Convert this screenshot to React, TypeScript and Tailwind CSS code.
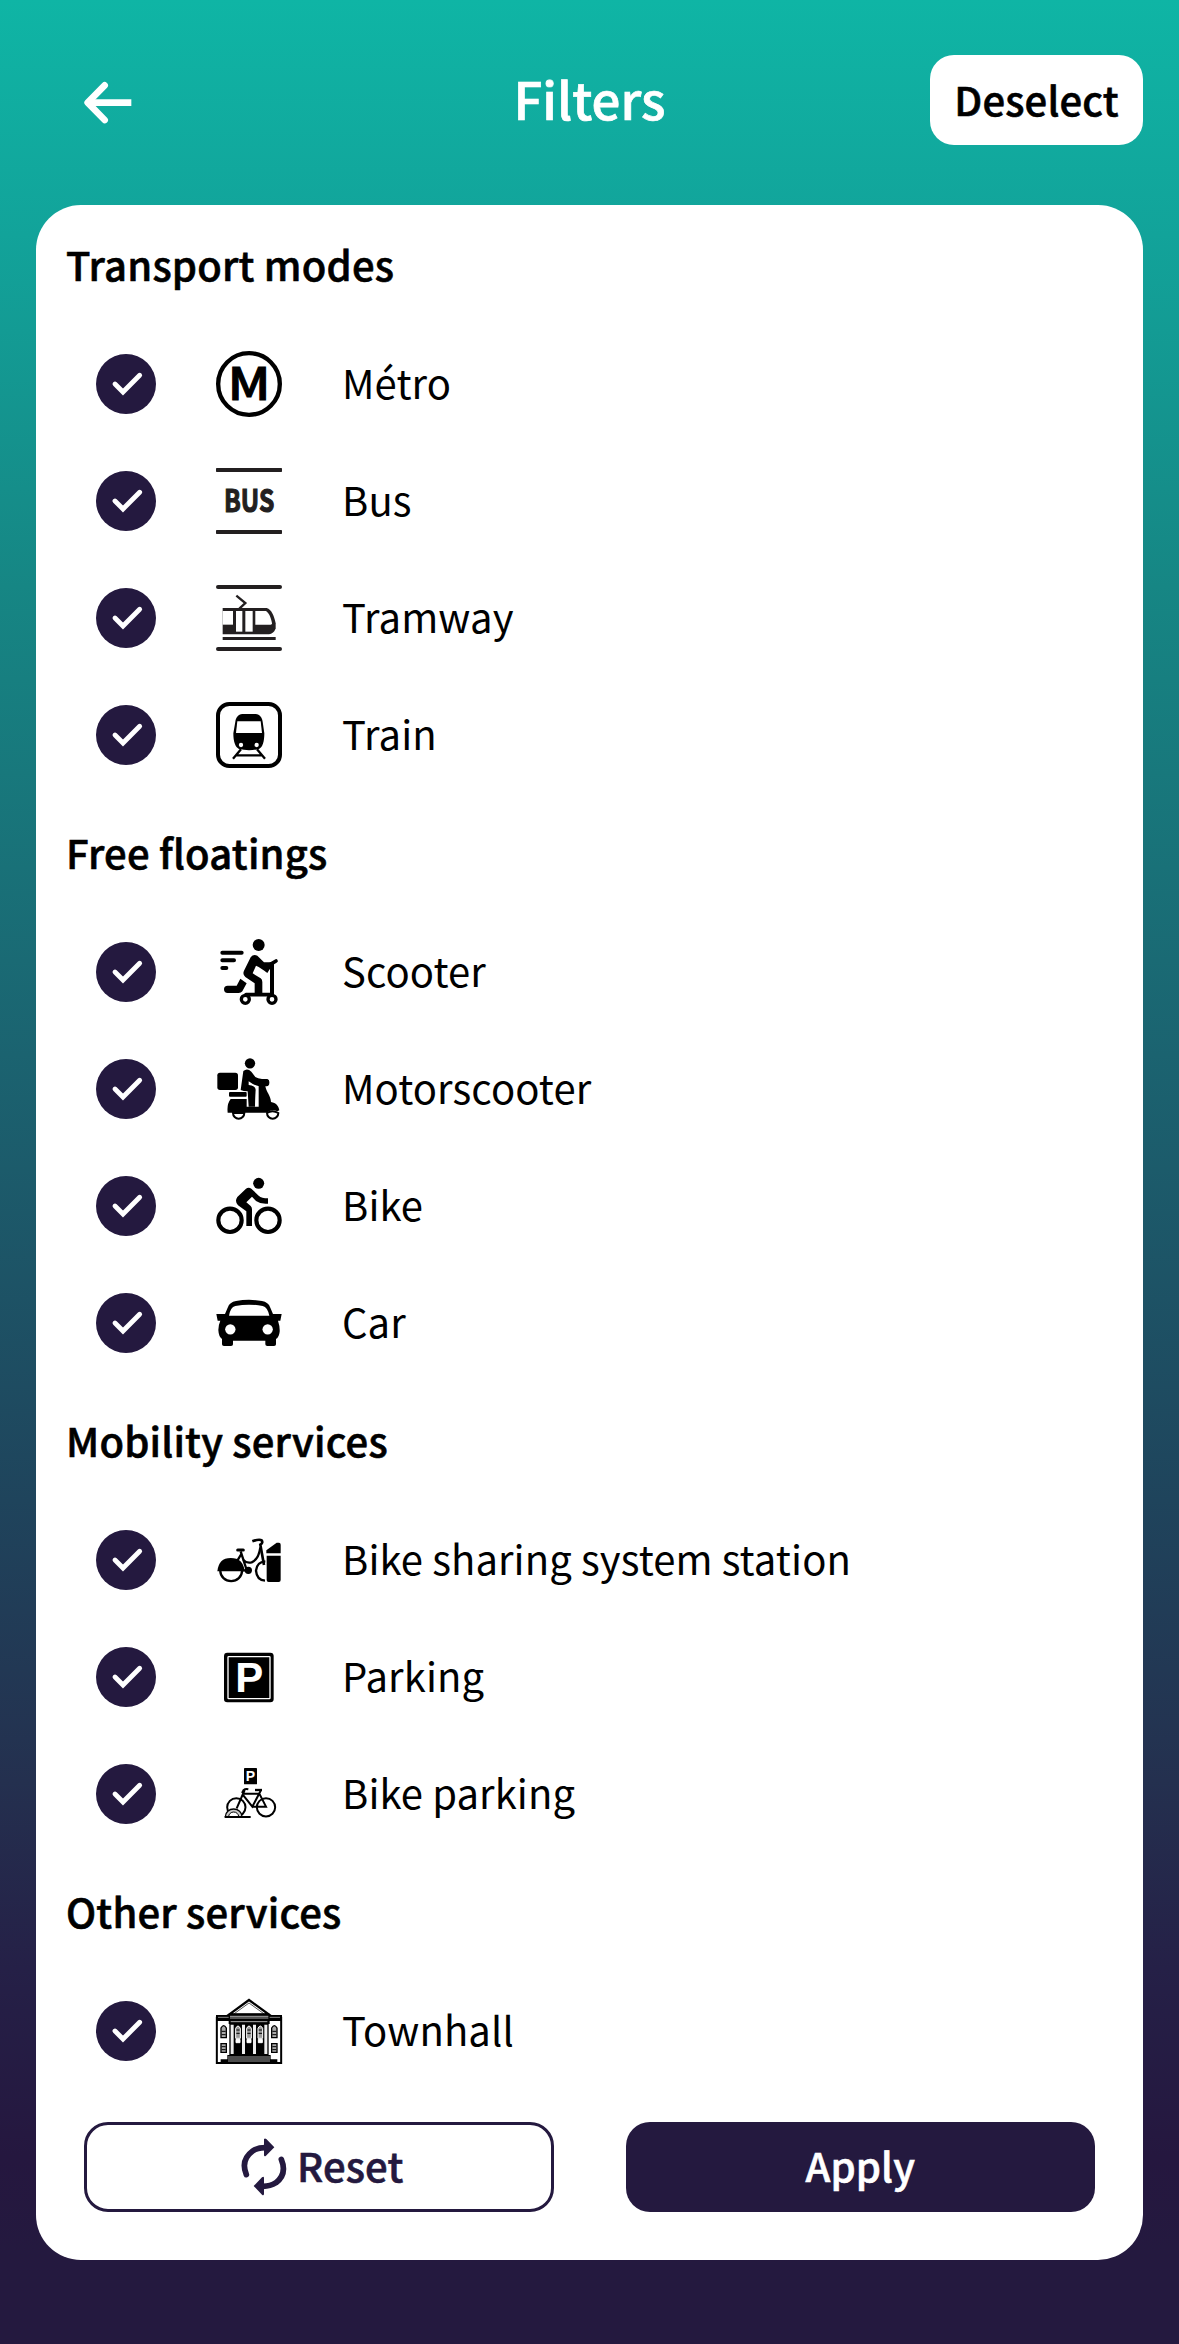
import type { ReactNode } from 'react';

function Icon({ viewBox, children }: { viewBox: string; children: ReactNode }) {
  return (
    <svg viewBox={viewBox} className="size-[66px] shrink-0 overflow-visible text-black" fill="currentColor" aria-hidden="true">
      {children}
    </svg>
  );
}

const MetroIcon = () => (
  <Icon viewBox="408 63 198 198">
    <circle cx="507" cy="162" r="92.5" fill="none" stroke="currentColor" strokeWidth="13" />
    <text x="443" y="211" textLength="128" lengthAdjust="spacingAndGlyphs" stroke="currentColor" strokeWidth="3" className="font-['Noto_Sans_CJK_JP',sans-serif] text-[134px] font-medium">M</text>
  </Icon>
);

const BusIcon = () => (
  <Icon viewBox="408 414 198 198">
    <g fill="#231f20">
      <rect x="408" y="414" width="198" height="12" rx="2" />
      <rect x="408" y="600" width="198" height="12" rx="2" />
      <text x="432" y="546" textLength="151" lengthAdjust="spacingAndGlyphs" stroke="#231f20" strokeWidth="3.500" className="font-['Noto_Sans_CJK_JP',sans-serif] text-[92px] font-bold">BUS</text>
    </g>
  </Icon>
);

const TramIcon = () => (
  <Icon viewBox="408 75 198 198">
    <g fill="#231f20">
      <rect x="408" y="75" width="198" height="12" rx="6" />
      <rect x="408" y="261" width="198" height="12" rx="6" />
      <path d="M428 144H560C575 148 582 168 587 190V205C583 217 575 223 562 223H428Z" />
      <rect x="428" y="231" width="159" height="9" />
      <path d="M469 107L496 129L478 146" fill="none" stroke="#231f20" strokeWidth="7" />
    </g>
    <g fill="white">
      <path d="M428 153H459V194H428Z" />
      <path d="M468 153H487V215H468Z" />
      <path d="M496 153H518V215H496Z" />
      <path d="M526 153H558C568 160 573 174 576 190Q576 194 572 194H526Z" />
    </g>
  </Icon>
);

const TrainIcon = () => (
  <Icon viewBox="408 426 198 198">
    <rect x="414" y="432" width="186" height="186" rx="34" fill="none" stroke="currentColor" strokeWidth="12" />
    <path d="M487 462H527C540 464 546 472 548 485L553 520C553 545 548 562 537 567Q507 574 477 567C466 562 460 545 460 520L466 485C468 472 474 464 487 462Z" />
    <path d="M472 484H542L546 519H468Z" fill="white" />
    <circle cx="483" cy="555" r="6.5" fill="white" />
    <circle cx="530" cy="555" r="6.5" fill="white" />
    <path d="M483 568L459 596M531 568L555 596M468 586H546" fill="none" stroke="currentColor" strokeWidth="7" />
  </Icon>
);

const ScooterIcon = () => (
  <Icon viewBox="78 57 198 198">
    <circle cx="206" cy="75" r="18" />
    <g fill="none" stroke="currentColor" strokeLinecap="round">
      <path d="M97 98H155M97 121H132M97 144H109" strokeWidth="12" />
      <path d="M240 134L258 123" strokeWidth="11" />
      <path d="M246 132V222" strokeWidth="12" />
      <path d="M168 224H246" strokeWidth="11" />
      <circle cx="166" cy="238" r="12" strokeWidth="10" />
      <circle cx="246" cy="238" r="12" strokeWidth="10" />
    </g>
    <path d="M182 112Q190 101 202 107L222 127H248V138L238 149L232 159L223 152L206 141L198 137L188 160L212 175Q217 179 217 186V222H194V190L166 171Q157 163 162 152Z" />
    <path d="M113 197H140L151 176L170 190L157 214Q153 219 146 219H113A11 11 0 0 1 113 197Z" />
  </Icon>
);

const MotorscooterIcon = () => (
  <Icon viewBox="78 408 198 198">
    <circle cx="180" cy="430" r="15.5" />
    <rect x="82" y="458" width="62" height="52" rx="8" />
    <rect x="117" y="516" width="53" height="14" rx="3" />
    <path d="M122 537H170V560H206V498H226C228 515 243 528 243 546C258 549 266 557 268 571L262 574Q247 566 230 578H113Q110 552 122 537Z" />
    <path d="M160 453Q172 443 184 455L196 471Q203 476 216 477H232Q239 479 238 488Q238 498 230 499H208Q190 495 176 484V495Q196 497 197 509L195 560H176L173 514Q160 514 152 510Z" />
    <path d="M198 508H203V557H196Z" fill="white" />
    <path d="M129 579A17 17 0 0 0 163 579ZM231 579A17 17 0 0 0 265 579Q247 569 231 579Z" fill="white" stroke="currentColor" strokeWidth="6" />
  </Icon>
);

const BikeIcon = () => (
  <Icon viewBox="78 69 198 198">
    <circle cx="206" cy="100" r="16.5" />
    <circle cx="120" cy="211" r="35" fill="none" stroke="currentColor" strokeWidth="12.500" />
    <circle cx="234" cy="211" r="35" fill="none" stroke="currentColor" strokeWidth="12.500" />
    <path d="M142 141L168 116Q176 110 184 116L206 137Q215 145 234 145V161Q212 163 198 153L186 140L169 157L182 168Q186 172 186 178V228H169V184L144 166Q133 154 142 141Z" />
  </Icon>
);

const CarIcon = () => (
  <Icon viewBox="78 420 198 198">
    <path d="M105 492L113 473Q119 456 138 453Q177 446 216 453Q235 456 241 473L249 492H275L271 512H264Q270 530 269 545Q267 562 258 567V583Q258 588 252 588H232Q226 588 226 583V572H129V583Q129 588 123 588H102Q96 588 96 583V567Q86 560 85 540Q85 525 91 512H83L79 492Z" />
    <path d="M117 497Q121 472 136 468Q177 460 218 468Q233 472 238 497Z" fill="white" />
    <circle cx="121" cy="538" r="15.5" fill="white" />
    <circle cx="233" cy="538" r="15.5" fill="white" />
  </Icon>
);

const BikeSharingIcon = () => (
  <Icon viewBox="78 51 198 198">
    <path d="M82 184Q86 144 122 144Q160 144 164 184Z" />
    <g fill="none" stroke="currentColor" strokeWidth="7">
      <path d="M91 183A32 30 0 0 0 156 183" />
      <path d="M143 120H160" strokeWidth="9" strokeLinecap="round" />
      <path d="M152 124L170 180M154 132L142 152M158 181H175" />
      <path d="M160 150Q170 161 185 157Q206 148 211 112" />
      <path d="M187 94Q208 86 215 91Q220 98 211 104L222 165" strokeWidth="8" />
      <path d="M226 154Q200 156 198 182Q200 210 225 212" />
    </g>
    <circle cx="175" cy="181" r="11" />
    <path d="M229 130V121L260 98H267Q272 98 272 104V130Z" />
    <path d="M230 137H272V210Q272 216 266 216H236Q230 216 230 210Z" />
  </Icon>
);

const ParkingIcon = () => (
  <Icon viewBox="78 12 198 198">
    <rect x="102" y="38" width="149" height="149" rx="10" />
    <rect x="114" y="50" width="126" height="126" rx="2" fill="none" stroke="white" strokeWidth="4" />
    <text x="136" y="157" fill="white" className="font-['Liberation_Sans',sans-serif] text-[126px] font-bold">P</text>
  </Icon>
);

const BikeParkingIcon = () => (
  <Icon viewBox="78 363 198 198">
    <rect x="162" y="384" width="39" height="49" rx="2" />
    <text x="167" y="423" fill="white" className="font-['Liberation_Sans',sans-serif] text-[42px] font-bold">P</text>
    <g fill="none" stroke="currentColor" strokeWidth="6">
      <circle cx="139" cy="502" r="27.5" />
      <circle cx="228" cy="502" r="27.5" />
      <path d="M156 459L161 450Q166 446 175 448M164 450L140 505M161 461H208M160 466L187 500L212 452M187 500H228L208 461" />
      <path d="M195 450H216" strokeWidth="7" />
      <path d="M106 530A25 23 0 0 1 156 530Z" fill="#ccc" strokeWidth="4" />
      <path d="M116 530A15 14 0 0 1 146 530" fill="white" strokeWidth="3" />
      <path d="M104 531H182" strokeWidth="6" />
    </g>
  </Icon>
);

const TownhallIcon = () => (
  <Icon viewBox="78 84 198 198">
    <path d="M80.500 140V279H273.500V140" fill="white" stroke="currentColor" strokeWidth="6" />
    <path d="M78 135H276V153H78Z" />
    <path d="M84 142H270" stroke="#ccc" strokeWidth="2" />
    <path d="M118 133L177 90L236 133Z" fill="white" stroke="currentColor" strokeWidth="7" />
    <path d="M130 133L177 99L224 133" fill="none" stroke="currentColor" strokeWidth="2" />
    <path d="M116 131H239V162H116Z" />
    <path d="M120 139H235M120 144H235M122 155H232" stroke="#aaa" strokeWidth="3" />
    <path d="M118 160H236V256H118Z" />
    <path fill="#eee" d="M122 164H131V252H122ZM156 164H165V252H156ZM189 164H198V252H189ZM223 164H232V252H223Z" />
    <g fill="#999" stroke="white" strokeWidth="3">
      <path d="M137 205V175Q144 161 151 175V205ZM170 205V175Q177 161 184 175V205ZM204 205V175Q211 161 218 175V205Z" />
      <path d="M138 208H150V218H138ZM171 208H183V218H171ZM205 208H217V218H205Z" fill="white" />
    </g>
    <g fill="#aaa" stroke="currentColor" strokeWidth="4">
      <path d="M93 203V174Q101 160 109 174V203ZM245 203V174Q253 160 261 174V203ZM93 221H109V247H93ZM245 221H261V247H245Z" />
    </g>
    <path d="M95 184H107M95 194H107M95 230H107M95 239H107M247 184H259M247 194H259M247 230H259M247 239H259M139 180H149M139 190H149M172 180H182M172 190H182M206 180H216M206 190H216" stroke="currentColor" strokeWidth="3" />
    <path d="M112 255H242V268H262V279H92V268H112Z" />
    <path d="M114 261H240M114 267H240M114 273H240" stroke="#999" strokeWidth="3" />
  </Icon>
);

const sections = [
  {
    title: 'Transport modes',
    items: [
      { label: 'Métro', icon: MetroIcon },
      { label: 'Bus', icon: BusIcon },
      { label: 'Tramway', icon: TramIcon },
      { label: 'Train', icon: TrainIcon },
    ],
  },
  {
    title: 'Free floatings',
    items: [
      { label: 'Scooter', icon: ScooterIcon },
      { label: 'Motorscooter', icon: MotorscooterIcon },
      { label: 'Bike', icon: BikeIcon },
      { label: 'Car', icon: CarIcon },
    ],
  },
  {
    title: 'Mobility services',
    items: [
      { label: 'Bike sharing system station', icon: BikeSharingIcon },
      { label: 'Parking', icon: ParkingIcon },
      { label: 'Bike parking', icon: BikeParkingIcon },
    ],
  },
  { title: 'Other services', items: [{ label: 'Townhall', icon: TownhallIcon }] },
];

function CheckedCircle() {
  return (
    <svg viewBox="0 0 180 180" className="size-[60px] shrink-0" fill="none" aria-hidden="true">
      <circle cx="90" cy="90" r="90" fill="#24193f" />
      <path d="M57 90L81 114L131 64" stroke="white" strokeWidth="14.500" strokeLinecap="round" />
    </svg>
  );
}

function Header() {
  return (
    <header className="grid h-[200px] shrink-0 grid-cols-3 items-center px-9 font-medium">
      <button className="mt-1.5 ml-[39px] justify-self-start text-white" aria-label="Back">
        <svg viewBox="15 69 180 180" className="size-[60px]" fill="none" stroke="currentColor" strokeWidth="20" aria-hidden="true">
          <path d="M56 158H184" />
          <path d="M104 106L53 158L104 210" strokeLinecap="round" strokeLinejoin="round" />
        </svg>
      </button>
      <h1 className="justify-self-center pb-1 text-[51px] text-white [-webkit-text-stroke:0.7px]">Filters</h1>
      <button className="flex h-[90px] w-[213px] items-center justify-center justify-self-end rounded-3xl bg-white pb-0.5 text-[40px] tracking-[0.15px] [-webkit-text-stroke:0.6px]">
        Deselect
      </button>
    </header>
  );
}

function Footer() {
  return (
    <footer className="mt-auto grid grid-cols-2 gap-[72px] px-12 pb-12 text-[40px] font-medium tracking-[0.15px] [-webkit-text-stroke:0.6px]">
      <button className="flex h-[90px] items-center justify-center gap-[3px] rounded-3xl border-3 border-[#24193f] text-[#24193f]">
        <svg viewBox="15 82 180 180" className="size-[60px]" fill="currentColor" aria-hidden="true">
          <path d="M52 195Q34 151 71 124Q85 114 108 114M157 149Q175 193 141 219Q124 230 102 230" fill="none" stroke="currentColor" strokeWidth="17" strokeLinecap="round" />
          <path d="M105 89Q107 84 112 88L136 113L111 138Q106 142 105 137ZM105 204Q104 199 99 203L74 229L99 255Q104 259 105 253Z" />
        </svg>
        <span className="pb-1">Reset</span>
      </button>
      <button className="flex h-[90px] items-center justify-center rounded-3xl bg-[#24193f] pb-1 text-white">
        Apply
      </button>
    </footer>
  );
}

export default function App() {
  return (
    <div className="flex h-[2344px] w-full flex-col bg-[linear-gradient(to_bottom,#0fb5a5_0%,#12a39a_10%,#168684_25%,#1b6370_45%,#1f445c_64%,#24304f_76%,#252047_84%,#25173f_92%,#24193f_96%)] font-['Noto_Sans_CJK_JP','Noto_Sans',sans-serif] leading-[60px] text-black">
      <Header />
      <main className="mx-9 mt-[5px] flex h-[2055px] flex-col rounded-[45px] bg-white">
        {sections.map(({ title, items }) => (
          <section key={title}>
            <h2 className="flex h-[120px] items-center px-[30px] pb-0.5 text-[40px] font-medium tracking-[0.2px] [-webkit-text-stroke:0.6px]">{title}</h2>
            <ul>
              {items.map(({ label, icon: ItemIcon }) => (
                <li key={label} className="flex h-[117px] items-center gap-[60px] px-[60px] pt-px text-[40px] tracking-[0.1px]">
                  <CheckedCircle />
                  <ItemIcon />
                  <span className="pb-1">{label}</span>
                </li>
              ))}
            </ul>
          </section>
        ))}
        <Footer />
      </main>
    </div>
  );
}
